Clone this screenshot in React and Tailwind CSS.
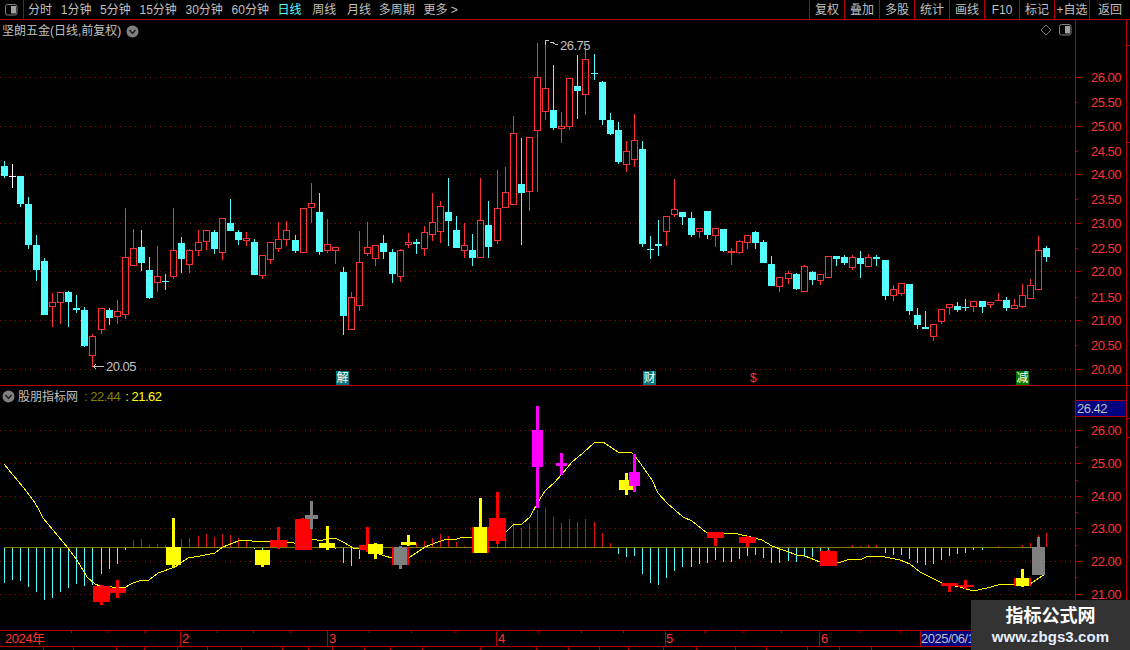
import React from 'react';

const RED = '#ff3232';
const CYAN = '#54ffff';

// [type, wickTop, bodyTop, bodyBottom, wickBottom] in page pixels
const candles = [
  ['c',161,166,176,178],['w',164,176,176,188],['c',176,176,204,207],['c',197,204,245,249],['c',235,245,270,281],
  ['c',258,261,315,315],['r',293,302,307,327],['r',292,292,303,324],['c',291,292,302,327],['c',295,308,310,313],
  ['c',307,310,346,347],['r',334,336,356,367],['r',308,308,330,334],['c',308,310,318,325],['r',300,311,317,324],
  ['r',208,257,315,319],['r',229,248,266,266],['c',230,247,263,271],['c',257,270,298,299],['r',246,276,283,292],
  ['c',274,281,281,290],['r',208,250,277,279],['c',237,243,259,273],['r',249,250,265,273],['r',230,242,251,256],
  ['r',230,230,242,250],['c',230,232,249,254],['r',218,218,253,260],['c',199,223,231,231],['c',230,232,240,245],
  ['r',232,238,241,246],['c',239,242,275,275],['r',255,255,276,279],['r',242,242,260,264],['r',222,239,249,252],
  ['r',221,230,240,246],['c',235,240,251,253],['r',208,208,253,253],['r',183,203,208,223],['c',193,212,252,255],
  ['r',219,244,251,253],['r',247,247,251,264],['c',267,272,316,335],['r',292,297,330,330],['r',231,262,306,311],
  ['r',222,247,254,256],['r',245,245,259,266],['c',235,243,252,259],['c',249,252,274,283],['r',249,250,277,282],
  ['r',233,242,245,248],['c',239,242,244,254],['r',226,232,249,256],['r',193,222,235,241],['r',201,206,232,243],
  ['c',178,212,221,246],['c',216,230,248,248],['r',223,245,251,258],['c',234,250,258,266],['r',178,220,258,258],
  ['c',201,225,247,258],['r',170,208,241,244],['r',167,192,208,208],['r',116,133,205,205],['c',138,184,193,245],
  ['r',137,137,192,211],['r',43,77,131,192],['r',40,88,112,120],['c',65,110,128,130],['r',112,126,129,143],
  ['r',78,78,127,130],['c',55,86,91,119],['r',45,59,95,115],['c',54,73,73,80],['c',81,82,120,125],
  ['c',113,120,134,135],['c',122,130,162,164],['r',141,151,165,172],['r',114,140,160,167],['c',141,149,244,247],
  ['c',236,249,249,259],['c',220,244,246,256],['r',216,216,232,246],['r',179,209,215,217],['c',212,212,217,225],
  ['c',212,218,235,237],['r',228,228,232,238],['c',211,211,235,239],['r',228,228,236,247],['c',229,229,251,252],
  ['f',248,251,253,265],['r',240,241,253,254],['r',235,235,243,249],['c',231,232,243,249],['c',240,242,263,263],
  ['c',256,264,286,286],['r',277,277,287,292],['r',271,273,279,284],['c',273,274,289,290],['r',265,266,292,292],
  ['c',271,272,280,285],['r',274,274,281,285],['r',256,256,278,278],['c',256,256,259,266],['c',255,257,263,265],
  ['r',255,257,268,270],['c',251,258,264,278],['r',254,257,267,267],['c',255,257,259,266],['c',260,260,296,300],
  ['r',285,289,296,301],['r',283,283,294,296],['c',284,284,311,315],['c',308,315,325,329],['c',311,327,329,329],
  ['r',324,324,337,341],['r',309,309,322,324],['r',304,304,308,315],['c',302,306,310,312],['c',299,307,307,311],
  ['r',301,301,307,312],['c',301,301,307,313],['r',302,302,305,308],['f',293,300,301,301],['c',297,300,308,311],
  ['r',299,305,309,309],['r',284,295,307,308],['r',279,285,299,299],['r',236,250,290,290],['c',246,248,257,262],
];

const jumps = [12, 24, 36, 48, 61, 73, 85, 97, 109, 121];
const colX = (i) => 4 + 8 * i + jumps.filter((n) => n <= i).length;

// histogram tips, index => y. zero line sits at y=547
const hist = {
  0:583,1:580,2:581,3:587,4:592,5:600,6:598,7:592,8:588,9:584,10:586,11:585,12:574,13:569,14:564,15:550,
  16:540,17:539,18:545,19:544,20:545,22:539,23:538,24:536,25:534,26:537,27:534,28:535,29:538,30:540,31:549,32:550,
  41:549,42:563,43:566,44:559,51:543,52:541,53:538,54:534,55:536,56:542,57:546,61:530,62:530,63:523,64:528,65:523,
  66:510,67:508,68:517,69:523,70:519,71:522,72:519,73:522,74:533,75:543,76:554,77:557,78:556,79:574,80:583,81:585,
  82:578,83:571,84:567,85:567,86:564,87:563,88:560,89:562,90:562,91:559,92:556,93:555,94:558,95:563,96:563,97:561,
  98:562,99:557,100:557,101:551,102:550,105:545,106:546,107:545,108:545,109:553,110:555,111:555,112:559,113:563,
  114:565,115:564,116:560,117:556,118:554,119:553,120:550,121:550,123:546,126:545,127:543,128:535,129:533,
};

const maLine = '4,464 13,475 23,487 33,500 38,508 43,518 53,530 68,548 77,560 87,577 95,584 100,586 124,588 133,583 142,580 149,580 158,573 175,567 188,558 200,556 215,553 223,547 238,541 248,540 252,541 267,541 277,543 288,542 300,544 312,539 317,540 321,541 328,538 335,538 345,543 353,548 367,550 385,556 392,558 410,557 425,547 438,542 447,539 457,539 463,537 468,537 473,538 507,531 513,525 522,524 530,517 538,502 545,491 555,482 562,474 572,462 583,453 595,442 603,442 618,452 632,453 638,460 652,480 658,493 667,503 683,517 692,521 707,533 733,533 747,536 762,540 772,546 797,555 805,556 820,562 838,563 850,559 862,559 868,556 880,556 900,560 910,564 920,572 942,583 960,587 973,591 987,588 998,585 1013,584 1030,584 1045,574';

// colour, x0, x1, y0, y1, wick centre, wick top, wick bottom, red side edges
const signals = [
  ['#ff0000',93,110,586,602,101,585,605],
  ['#ff0000',110,126,588,593,117,580,598],
  ['#ffff00',166,181,547,565,173,518,568],
  ['#ffff00',255,270,550,565,262,550,567],
  ['#ff0000',270,287,540,547,278,527,549],
  ['#ff0000',295,312,519,550,302,518,550],
  ['#808080',305,318,515,519,311,501,529],
  ['#ffff00',319,335,543,548,327,526,550],
  ['#ff0000',359,368,545,550,367,527,552],
  ['#ffff00',368,383,544,554,375,543,559],
  ['#808080',392,409,547,565,400,546,569,true],
  ['#ffff00',401,416,542,545,408,535,546],
  ['#ffff00',472,489,527,553,480,498,527,true],
  ['#ff0000',489,506,518,541,497,492,544],
  ['#ff00ff',532,543,430,467,537,406,508],
  ['#ff00ff',556,567,463,466,561,453,475],
  ['#ffff00',619,633,480,490,626,473,495],
  ['#ff00ff',629,640,472,486,634,454,492],
  ['#ff0000',707,724,532,538,715,532,546],
  ['#ff0000',739,756,537,543,747,536,547],
  ['#ff0000',820,837,551,566,828,550,566],
  ['#ff0000',941,958,583,586,949,583,592],
  ['#ff0000',958,974,585,587,965,580,589],
  ['#ffff00',1014,1031,578,586,1022,569,587,true],
  ['#808080',1032,1045,547,575,1038,537,547],
];

const mainAxis = [
  ['26.00',77],['25.50',102],['25.00',126],['24.50',151],['24.00',174],['23.50',199],['23.00',223],
  ['22.50',248],['22.00',271],['21.50',297],['21.00',320],['20.50',345],['20.00',369],
];
const oscAxis = [['26.00',430],['25.00',463],['24.00',496],['23.00',528],['22.00',561],['21.00',594]];
const oscHalf = [447, 480, 512, 545, 577];

const leftTabs = [
  ['分时', ''], ['1分钟', ''], ['5分钟', ''], ['15分钟', ''], ['30分钟', ''], ['60分钟', ''],
  ['日线', 'text-[#54ffff]'], ['周线', 'ml-[2px]'], ['月线', 'ml-[2px]'], ['多周期', 'ml-[-1px]'], ['更多 >', ''],
];
const rightTabs = ['复权', '叠加', '多股', '统计', '画线', 'F10', '标记', '+自选'];

const monthMarks = [['2024年',5,0],['2',182,180],['3',329,327],['4',498,496],['5',666,665],['6',821,819]];
const timeTicks = [71,108,144,217,253,290,369,411,454,538,581,623,704,742,781,860,900];
const footLines = [43,73,116,144,177,207,241,282,308,332,364,390,422,480,536,568,599,628,663,696,735,766,807,839,871];

function Candle({ c, i }) {
  const [type, wt, bt, bb, wb] = c;
  const x = colX(i);
  const color = type === 'r' || type === 'f' ? RED : type === 'w' ? '#ffffff' : CYAN;
  if (type === 'r') {
    return (
      <g stroke={color} fill="none">
        {wt < bt && <line x1={x + 0.5} x2={x + 0.5} y1={wt} y2={bt} />}
        {wb > bb && <line x1={x + 0.5} x2={x + 0.5} y1={bb} y2={wb} />}
        <rect x={x - 2.5} y={bt + 0.5} width={6} height={bb - bt - 1} />
      </g>
    );
  }
  return (
    <g>
      <rect x={x} y={wt} width={1} height={wb - wt} fill={color} />
      <rect x={x - 3} y={bt} width={7} height={Math.max(bb - bt, 1)} fill={color} />
    </g>
  );
}

function Signal({ s }) {
  const [color, x0, x1, y0, y1, wx, wt, wb, edged] = s;
  return (
    <g>
      <rect x={wx - 1} y={wt} width={3} height={wb - wt} fill={color} />
      <rect x={x0} y={y0} width={x1 - x0} height={y1 - y0} fill={color} />
      {edged && <rect x={x0} y={y0} width={2} height={y1 - y0} fill="#ff0000" />}
      {edged && <rect x={x1 - 2} y={y0} width={2} height={y1 - y0} fill="#ff0000" />}
    </g>
  );
}

function PanelIcon() {
  return (
    <svg width="13" height="12" viewBox="0 0 13 12">
      <rect x="0.5" y="0.5" width="11.5" height="10.5" rx="2" fill="none" stroke="#808080" />
      <rect x="6" y="2" width="5" height="7.5" fill="#a0a0a0" />
    </svg>
  );
}

function ChevronDot() {
  return (
    <svg width="13" height="13" viewBox="0 0 13 13">
      <circle cx="6.5" cy="6.5" r="6" fill="#808080" />
      <polyline points="3.5,5 6.5,8.5 9.5,5" fill="none" stroke="#1c1c1c" strokeWidth="1.4" />
    </svg>
  );
}

function Tag({ left, bg, children }) {
  return (
    <span
      className={`absolute top-[351px] flex h-[14px] w-[13px] items-center justify-center text-[12px] leading-none text-white ${bg}`}
      style={{ left }}
    >
      {children}
    </span>
  );
}

export default function App() {
  return (
    <div className="relative flex h-[650px] w-[1130px] flex-col overflow-hidden bg-black font-['Liberation_Sans','Noto_Sans_CJK_SC',sans-serif] text-[12px] text-[#c0c0c0]">
      {/* top toolbar */}
      <div className="flex h-[20px] shrink-0 items-center border-b border-[#b00000]">
        <div className="flex h-full w-[24px] shrink-0 items-center justify-center border-r border-[#b00000]">
          <PanelIcon />
        </div>
        <div className="ml-[4px] flex flex-1 gap-[8.7px]">
          {leftTabs.map(([label, cls]) => (
            <span key={label} className={`whitespace-nowrap ${cls}`}>{label}</span>
          ))}
        </div>
        {rightTabs.map((label) => (
          <span key={label} className="flex h-full w-[35px] shrink-0 items-center justify-center whitespace-nowrap border-l border-[#b00000]">
            {label}
          </span>
        ))}
        <span className="flex h-full w-[41px] shrink-0 items-center justify-center border-l border-[#b00000]">返回</span>
      </div>

      {/* price panel */}
      <div className="flex h-[366px] shrink-0 border-b border-[#b00000]">
        <div className="relative w-[1075px] shrink-0">
          <svg width="1075" height="365" viewBox="0 20 1075 365" className="block">
            {[77, 126, 174, 223, 271, 320, 369].map((y) => (
              <line key={y} x1="0" x2="1075" y1={y + 0.5} y2={y + 0.5} stroke="#901010" strokeDasharray="1 4" />
            ))}
            <g shapeRendering="crispEdges">
              {candles.map((c, i) => <Candle key={i} c={c} i={i} />)}
              <g stroke="#c0c0c0" fill="none">
                <path d="M93 366.5H104M93 366.5l3 -2M93 366.5l3 2" />
                <path d="M545.5 45V40.5H549M550 42.5h3l2 1.5h3" />
              </g>
            </g>
          </svg>
          <div className="absolute left-[2px] top-[2px] flex items-center gap-[5px]">
            <span className="whitespace-nowrap">坚朗五金(日线,前复权)</span>
            <ChevronDot />
          </div>
          <div className="absolute right-[3px] top-[4px] flex items-center gap-[7px]">
            <svg width="12" height="12" viewBox="0 0 12 12">
              <path d="M6 1 L11 6 L6 11 L1 6 Z" fill="none" stroke="#707070" />
            </svg>
            <PanelIcon />
          </div>
          <span className="absolute left-[560px] top-[19px] text-[13px] leading-[14px] tracking-[-0.5px]">26.75</span>
          <span className="absolute left-[106px] top-[340px] text-[13px] leading-[14px] tracking-[-0.5px]">20.05</span>
          <Tag left={336} bg="bg-[#007878]">解</Tag>
          <Tag left={643} bg="bg-[#007878]">财</Tag>
          <span className="absolute left-[750px] top-[351px] text-[12px] leading-[14px] text-[#ff3232]">$</span>
          <Tag left={1016} bg="bg-[#007a00]">减</Tag>
        </div>
        <div className="relative w-[51px] shrink-0 border-l border-[#b00000]">
          {mainAxis.map(([label, y], i) => (
            <React.Fragment key={label}>
              <span className={`absolute left-0 h-px bg-[#b00000] ${i % 2 ? 'w-[2px]' : 'w-[5px]'}`} style={{ top: y - 20 }} />
              <span className="absolute left-[15px] text-[13px] leading-[14px] tracking-[-0.5px] text-[#ff3232]" style={{ top: y - 26 }}>{label}</span>
            </React.Fragment>
          ))}
        </div>
        <div className="relative flex-1 border-l border-[#b00000]">
          <span className="absolute left-0 top-[25px] h-px w-full bg-[#b00000]" />
          <span className="absolute left-0 top-[122px] h-px w-full bg-[#b00000]" />
        </div>
      </div>

      {/* indicator panel */}
      <div className="flex h-[244px] shrink-0">
        <div className="relative w-[1075px] shrink-0">
          <svg width="1075" height="244" viewBox="0 386 1075 244" className="block">
            {oscAxis.map(([, y]) => (
              <line key={y} x1="0" x2="1075" y1={y + 0.5} y2={y + 0.5} stroke="#901010" strokeDasharray="1 4" />
            ))}
            <g shapeRendering="crispEdges">
              {Object.entries(hist).map(([i, y]) => (
                <rect
                  key={i}
                  x={colX(+i)}
                  width={1}
                  y={Math.min(y, 547)}
                  height={Math.abs(y - 547)}
                  fill={y < 547 ? '#e01010' : CYAN}
                />
              ))}
              <rect x="4" y="547" width="1041" height="1" fill="#808000" />
              <polyline points={maLine} fill="none" stroke="#ffff00" strokeWidth="1" />
              {signals.map((s, i) => <Signal key={i} s={s} />)}
            </g>
          </svg>
          <div className="absolute left-[2px] top-[1px] flex items-center whitespace-nowrap">
            <ChevronDot />
            <span className="ml-[3px]">股朋指标网</span>
            <span className="ml-[6px] text-[13px] tracking-[-0.5px] text-[#808000]">: 22.44</span>
            <span className="ml-[5px] text-[13px] tracking-[-0.5px] text-[#ffff00]">: 21.62</span>
          </div>
        </div>
        <div className="relative w-[51px] shrink-0 border-l border-[#b00000]">
          <div className="absolute left-0 top-[14px] flex h-[17px] w-full items-center border-y border-[#b00000] bg-[#000080] pl-[1px] text-[13px] tracking-[-0.5px]">26.42</div>
          {oscAxis.map(([label, y]) => (
            <React.Fragment key={label}>
              <span className="absolute left-0 h-px w-[5px] bg-[#b00000]" style={{ top: y - 386 }} />
              <span className="absolute left-[15px] text-[13px] leading-[14px] tracking-[-0.5px] text-[#ff3232]" style={{ top: y - 392 }}>{label}</span>
            </React.Fragment>
          ))}
          {oscHalf.map((y) => (
            <span key={y} className="absolute left-0 h-px w-[2px] bg-[#b00000]" style={{ top: y - 386 }} />
          ))}
        </div>
        <div className="relative flex-1 border-l border-[#b00000]">
          <span className="absolute left-0 top-[32px] h-px w-full bg-[#b00000]" />
          <span className="absolute left-0 top-[51px] h-px w-full bg-[#b00000]" />
        </div>
      </div>

      {/* time axis */}
      <div className="relative h-[17px] shrink-0 border-y border-[#b00000] text-[13px] tracking-[-0.5px] text-[#ff3232]">
        {monthMarks.map(([label, x, divider]) => (
          <React.Fragment key={label}>
            {divider > 0 && <span className="absolute top-0 h-full w-px bg-[#b00000]" style={{ left: divider }} />}
            <span className="absolute top-[1px] leading-[14px]" style={{ left: x }}>{label}</span>
          </React.Fragment>
        ))}
        {timeTicks.map((x) => (
          <span key={x} className="absolute top-0 h-[2px] w-px bg-[#b00000]" style={{ left: x }} />
        ))}
        <span className="absolute left-[920px] top-0 h-full w-px bg-[#b00000]" />
        <span className="absolute left-[921px] top-0 flex h-full w-[60px] items-center whitespace-nowrap bg-[#000080] text-[#c0c0c0]">
          2025/06/1
        </span>
      </div>

      {/* clipped footer row */}
      <div className="relative flex-1">
        {footLines.map((x) => (
          <span key={x} className="absolute top-0 h-full w-px bg-[#b00000]" style={{ left: x }} />
        ))}
      </div>

      {/* site watermark */}
      <div className="absolute bottom-0 right-0 flex h-[50px] w-[159px] flex-col items-center bg-[#333333] pt-[4px]">
        <span className="text-[18px] font-bold leading-[24px] text-white">指标公式网</span>
        <span className="text-[15px] font-bold leading-[18px] tracking-[0.1px] text-[#e4eeff]">www.zbgs3.com</span>
      </div>
    </div>
  );
}
